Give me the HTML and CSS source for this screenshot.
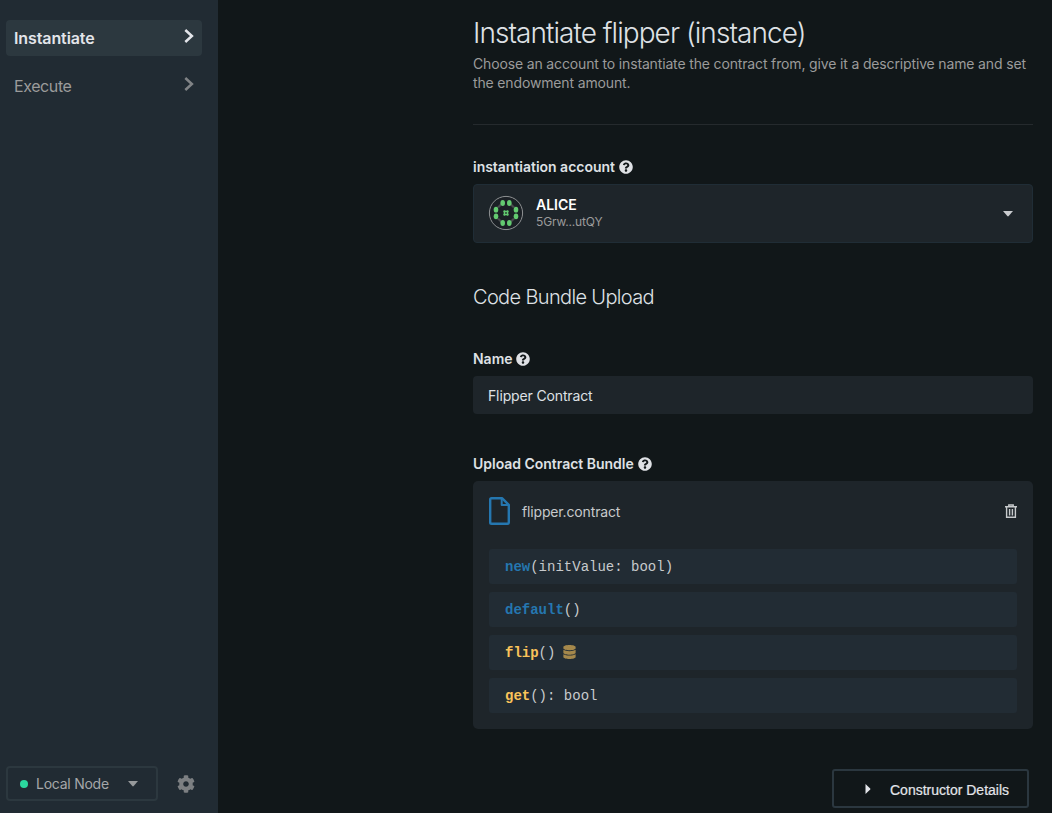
FILE: index.html
```
<!DOCTYPE html>
<html lang="en">
<head>
<meta charset="utf-8">
<title>Instantiate flipper</title>
<link rel="stylesheet" href="styles.css">
</head>
<body>
<svg class="defs" width="0" height="0">
  <symbol id="help" viewBox="0 0 512 512"><path d="M504 256c0 136.997-111.043 248-248 248S8 392.997 8 256C8 119.083 119.043 8 256 8s248 111.083 248 248zM262.655 90c-54.497 0-89.255 22.957-116.549 63.758-3.536 5.286-2.353 12.415 2.715 16.258l34.699 26.31c5.205 3.947 12.621 3.008 16.665-2.122 17.864-22.658 30.113-35.797 57.303-35.797 20.429 0 45.698 13.148 45.698 32.958 0 14.976-12.363 22.667-32.534 33.976C247.128 238.528 216 254.941 216 296v4c0 6.627 5.373 12 12 12h56c6.627 0 12-5.373 12-12v-1.333c0-28.462 83.186-29.647 83.186-106.667 0-58.002-60.165-102-116.531-102zM256 338c-25.365 0-46 20.635-46 46 0 25.364 20.635 46 46 46s46-20.636 46-46c0-25.365-20.635-46-46-46z"/></symbol>
  <symbol id="chevron" viewBox="0 0 10 14"><path d="M1.300 1 7.900 7l-6.600 6" fill="none" stroke="currentColor" stroke-width="2.500"/></symbol>
</svg>
<div class="app">
  <aside class="sidebar">
    <nav class="nav">
      <a class="nav-item active"><span>Instantiate</span><svg class="chev"><use href="#chevron"/></svg></a>
      <a class="nav-item"><span>Execute</span><svg class="chev"><use href="#chevron"/></svg></a>
    </nav>
    <div class="side-foot">
      <div class="node"><i class="dot"></i><span>Local Node</span><svg class="node-caret" viewBox="0 0 10 6"><path d="M0 0h10L5.700 5.100q-.7.7-1.400 0z"/></svg></div>
      <svg class="gear" viewBox="0 0 512 512"><path d="M487.400 315.700l-42.600-24.600c4.300-23.200 4.300-47 0-70.200l42.600-24.600c4.900-2.800 7.100-8.600 5.500-14-11.100-35.600-30-67.800-54.700-94.600-3.800-4.100-10-5.100-14.800-2.300L380.800 110c-17.900-15.400-38.500-27.300-60.800-35.100V25.800c0-5.600-3.900-10.500-9.400-11.700-36.700-8.200-74.300-7.800-109.200 0-5.500 1.200-9.400 6.100-9.400 11.700V75c-22.200 7.900-42.800 19.800-60.800 35.100L88.700 85.500c-4.900-2.800-11-1.900-14.800 2.300-24.700 26.700-43.600 58.900-54.700 94.600-1.700 5.400.6 11.200 5.500 14L67.300 221c-4.300 23.200-4.300 47 0 70.200l-42.600 24.600c-4.900 2.800-7.100 8.600-5.500 14 11.100 35.600 30 67.800 54.700 94.600 3.800 4.100 10 5.100 14.800 2.300l42.600-24.600c17.900 15.400 38.500 27.300 60.800 35.100v49.200c0 5.600 3.900 10.500 9.400 11.700 36.700 8.200 74.300 7.800 109.200 0 5.500-1.200 9.400-6.100 9.400-11.700v-49.200c22.200-7.900 42.800-19.800 60.800-35.100l42.600 24.600c4.900 2.800 11 1.900 14.800-2.300 24.700-26.700 43.600-58.900 54.700-94.600 1.500-5.500-.7-11.300-5.600-14.100zM256 336c-44.100 0-80-35.900-80-80s35.900-80 80-80 80 35.900 80 80-35.900 80-80 80z"/></svg>
    </div>
  </aside>
  <main class="main">
    <header class="head">
      <h1>Instantiate flipper (instance)</h1>
      <p>Choose an account to instantiate the contract from, give it a descriptive name and set the endowment amount.</p>
    </header>
    <div class="label l-account"><span>instantiation account</span><svg class="help"><use href="#help"/></svg></div>
    <div class="account">
      <svg class="avatar" viewBox="0 0 36 36">
        <circle cx="18" cy="18" r="16.600" fill="#1b2025" stroke="#8e9193" stroke-width="1"/>
        <path d="M9 12l4-4v3l-2 2zM27 12l-4-4v3l2 2zM9 24l4 4v-3l-2-2zM27 24l-4 4v-3l2-2z" fill="#494b4d"/>
        <g fill="#63ca70"><ellipse cx="14.700" cy="8" rx="2.300" ry="2.900"/><ellipse cx="21.300" cy="8" rx="2.300" ry="2.900"/><ellipse cx="14.700" cy="28" rx="2.300" ry="2.900"/><ellipse cx="21.300" cy="28" rx="2.300" ry="2.900"/><ellipse cx="8" cy="14.700" rx="2.300" ry="2.900"/><ellipse cx="8" cy="21.300" rx="2.300" ry="2.900"/><ellipse cx="28" cy="14.700" rx="2.300" ry="2.900"/><ellipse cx="28" cy="21.300" rx="2.300" ry="2.900"/></g>
        <path d="M16.500 15.300v5.400M19.500 15.300v5.400M15.300 16.500h5.400M15.300 19.500h5.400" fill="none" stroke="#63ca70" stroke-width="1.400"/>
      </svg>
      <div class="who"><b>ALICE</b><span>5Grw...utQY</span></div>
      <svg class="acc-caret" viewBox="0 0 10 6"><path d="M0 0h10L5.700 5.100q-.7.7-1.400 0z"/></svg>
    </div>
    <h2>Code Bundle Upload</h2>
    <div class="label l-name"><span>Name</span><svg class="help"><use href="#help"/></svg></div>
    <div class="input">Flipper Contract</div>
    <div class="label l-bundle"><span>Upload Contract Bundle</span><svg class="help"><use href="#help"/></svg></div>
    <section class="bundle">
      <div class="file">
        <svg class="doc" viewBox="0 0 21 28"><path d="M2.500 1.200H13L19.800 7.800V25.500q0 1.300-1.300 1.300H2.500q-1.300 0-1.300-1.300V2.500q0-1.300 1.300-1.300z" stroke-width="2.400"/><path d="M12.700 1.500V8H19.500" stroke-width="2"/></svg>
        <span>flipper.contract</span>
        <svg class="trash" viewBox="0 0 12 15"><path d="M1.600 3v10.300h8.800V3M4.600 5v6.600M7.400 5v6.600M0 2.700h12M3.800 2.500V1h4.400v1.500" stroke-width="1.400"/></svg>
      </div>
      <div class="row"><b class="ctor">new</b>(initValue: bool)</div>
      <div class="row"><b class="ctor">default</b>()</div>
      <div class="row"><b class="msg">flip</b>()<svg class="db" viewBox="0 0 448 512"><path d="M448 73.143v45.714C448 159.143 347.667 192 224 192S0 159.143 0 118.857V73.143C0 32.857 100.333 0 224 0s224 32.857 224 73.143zM448 176v102.857C448 319.143 347.667 352 224 352S0 319.143 0 278.857V176c48.125 33.143 136.208 48.572 224 48.572S399.874 209.143 448 176zm0 160v102.857C448 479.143 347.667 512 224 512S0 479.143 0 438.857V336c48.125 33.143 136.208 48.572 224 48.572S399.874 369.143 448 336z"/></svg></div>
      <div class="row"><b class="msg">get</b>(): bool</div>
    </section>
    <div class="actions"><button class="details"><svg viewBox="0 0 5 10"><path d="M0 0 4.700 4.400q.5.600 0 1.200L0 10z"/></svg><span>Constructor Details</span></button></div>
  </main>
</div>
</body>
</html>
```
FILE: styles.css
```
* { box-sizing: border-box; }
body { margin: 0; background: #111719; color: #dfe1e5; font-family: Inter, "Liberation Sans", sans-serif; font-size: 14px; overflow: hidden; }
h1, h2, p { margin: 0; font-weight: 400; }
.defs { display: block; }
.app { display: flex; height: 813px; }
.sidebar { width: 218px; flex: none; background: #212b33; display: flex; flex-direction: column; justify-content: space-between; padding: 20px 16px 12px 6px; }
.nav { display: flex; flex-direction: column; gap: 12px; }
.nav-item { display: flex; justify-content: space-between; align-items: center; height: 36px; padding: 0 8px; border-radius: 4px; font-size: 16px; letter-spacing: -0.4px; color: #9b9b9b; }
.nav-item.active { background: #2c383f; color: #e3e5ea; font-weight: 600; letter-spacing: -0.1px; }
.chev { width: 10px; height: 14px; margin-bottom: 4px; color: #808386; }
.active .chev { color: #e3e5ea; }
.side-foot { display: flex; align-items: center; gap: 19px; }
.node { display: flex; align-items: center; width: 152px; height: 35px; border: 2px solid #2c383f; border-radius: 4px; padding-left: 12px; color: #a5a7a9; letter-spacing: -0.25px; }
.dot { width: 8px; height: 8px; border-radius: 50%; background: #2bd99f; margin-right: 8px; }
.node-caret { width: 10px; height: 6px; margin-left: 19px; fill: #96999b; }
.gear { width: 18px; height: 18px; fill: #7c7f82; }
.main { width: 560px; margin-left: 255px; flex: none; display: flex; flex-direction: column; }
.head { height: 125px; padding-top: 16px; border-bottom: 1px solid #252a2d; }
h1 { font-size: 28px; line-height: 34px; font-weight: 350; letter-spacing: -0.94px; }
.head p { margin-top: 4px; line-height: 19px; letter-spacing: -0.15px; color: #9b9b9b; }
.label { display: flex; align-items: center; gap: 4px; height: 18px; font-weight: 600; letter-spacing: -0.02px; }
.help { width: 14px; height: 14px; margin-top: 1px; fill: #dfe1e5; }
.l-account { margin-top: 32px; }
.account { display: flex; align-items: center; height: 59px; margin-top: 9px; padding: 0 19px 0 14px; background: #1e252a; border: 1px solid #202d36; border-radius: 4px; }
.avatar { width: 36px; height: 36px; margin-bottom: 1px; }
.who { display: flex; flex-direction: column; margin-left: 12px; flex: 1; }
.who b { font-weight: 600; line-height: 16px; color: #fff; }
.who span { font-size: 12px; line-height: 17px; letter-spacing: -0.15px; color: #9b9b9b; }
.acc-caret { width: 10px; height: 6px; fill: #c9cbce; }
h2 { margin-top: 40px; height: 28px; font-size: 20px; line-height: 28px; font-weight: 350; letter-spacing: -0.65px; }
.l-name { margin-top: 38px; }
.input { height: 38px; margin-top: 9px; padding: 0 15px; line-height: 40px; letter-spacing: -0.14px; background: #1e252a; border-radius: 4px; }
.l-bundle { margin-top: 40px; }
.bundle { display: flex; flex-direction: column; gap: 8px; height: 248px; margin-top: 9px; padding: 16px; background: #1e252a; border-radius: 5px; }
.file { display: flex; align-items: center; height: 28px; margin-bottom: 16px; color: #c7cacc; letter-spacing: -0.15px; }
.file span { flex: 1; margin-left: 12px; }
.doc { width: 21px; height: 28px; fill: none; stroke: #2577b0; stroke-linejoin: round; }
.trash { width: 12px; height: 15px; fill: none; stroke: #c7cacc; }
.row { display: flex; align-items: center; height: 35px; padding: 0 16px; background: #222c34; border-radius: 3px; color: #c7cacc; font-family: "Courier New", "Liberation Mono", monospace; white-space: pre; }
.ctor { color: #2577b0; }
.msg { color: #fac35a; }
.db { width: 13px; height: 14px; margin-left: 8px; fill: #a5884b; margin-bottom: 2px; }
.actions { display: flex; justify-content: flex-end; margin-top: 40px; padding-right: 4px; }
.details { display: flex; align-items: center; width: 197px; height: 39px; padding: 2px 0 0 31px; border: 2px solid #2b373f; border-radius: 3px; background: transparent; color: #e3e5ea; font: 14px "Liberation Sans", Arial, sans-serif; -webkit-text-stroke: 0.2px #e3e5ea; }
.details svg { width: 6px; height: 10px; margin: 0 19px 2px 0; fill: #e3e5ea; }
```
